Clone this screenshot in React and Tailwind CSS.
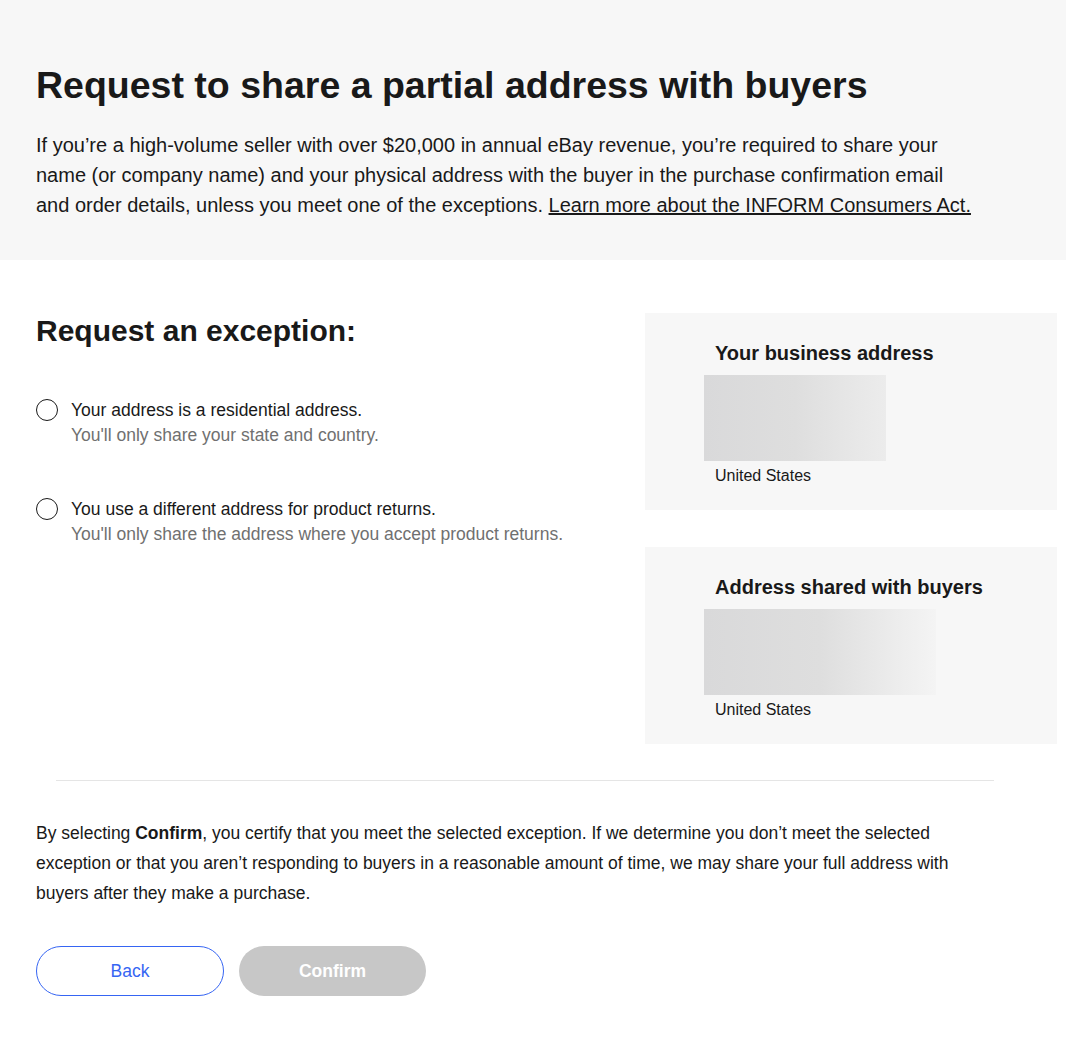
export default function App() {
  const font = { fontFamily: '"Liberation Sans", Arial, sans-serif' };
  return (
    <div className="w-[1066px] min-h-[1050px] bg-white text-[#191919]" style={font}>
      <div className="bg-[#f7f7f7] h-[260px] px-[36px] pt-[62px]">
        <h1 className="text-[37.5px] font-bold leading-[46px]">Request to share a partial address with buyers</h1>
        <p className="mt-[22px] text-[20px] leading-[30px] w-[950px]">
          If you’re a high-volume seller with over $20,000 in annual eBay revenue, you’re required to share your<br />
          name (or company name) and your physical address with the buyer in the purchase confirmation email<br />
          and order details, unless you meet one of the exceptions. <a className="underline" href="#">Learn more about the INFORM Consumers Act.</a>
        </p>
      </div>

      <div className="flex pl-[36px] pr-[9px] pt-[53px]">
        <div className="flex-1">
          <h2 className="text-[30px] font-bold leading-[36px]">Request an exception:</h2>
          <div className="mt-[50px] flex flex-col gap-[50px]">
            <Option title="Your address is a residential address." sub="You'll only share your state and country." />
            <Option title="You use a different address for product returns." sub="You'll only share the address where you accept product returns." />
          </div>
        </div>
        <div className="w-[412px] flex flex-col gap-[37px]">
          <Card title="Your business address" blurW="w-[182px]" to="to-[#ececec]" />
          <Card title="Address shared with buyers" blurW="w-[232px]" to="to-[#f4f4f4]" />
        </div>
      </div>

      <div className="mx-[56px] mt-[36px] w-[938px] h-px bg-[#e5e5e5]" />

      <p className="px-[36px] mt-[37px] text-[17.5px] leading-[30px] w-[1000px]">
        By selecting <b>Confirm</b>, you certify that you meet the selected exception. If we determine you don’t meet the selected<br />
        exception or that you aren’t responding to buyers in a reasonable amount of time, we may share your full address with<br />
        buyers after they make a purchase.
      </p>

      <div className="flex gap-[15px] px-[36px] mt-[38px]">
        <button className="w-[188px] h-[50px] rounded-full border border-[#3665f3] text-[#3665f3] text-[17.5px] bg-white">Back</button>
        <button className="w-[187px] h-[50px] rounded-full bg-[#c7c7c7] text-white text-[17.5px] font-bold">Confirm</button>
      </div>
    </div>
  );
}

function Option({ title, sub }) {
  return (
    <div className="flex items-start gap-[13px]">
      <div className="w-[22px] h-[22px] rounded-full border-[1.5px] border-[#191919] shrink-0 bg-white" />
      <div className="text-[17.5px] leading-[25px] -mt-[1px]">
        <div className="text-[#191919]">{title}</div>
        <div className="text-[#707070]">{sub}</div>
      </div>
    </div>
  );
}

function Card({ title, blurW, to }) {
  return (
    <div className="bg-[#f7f7f7] h-[197px] pt-[28px] pl-[59px]">
      <div className="pl-[11px] text-[20px] font-bold leading-[24px]">{title}</div>
      <div className={`${blurW} ${to} h-[86px] mt-[10px] bg-gradient-to-r from-[#d9d9da] via-[#dedede]`} />
      <div className="pl-[11px] text-[16px] leading-[20px] mt-[5px]">United States</div>
    </div>
  );
}
